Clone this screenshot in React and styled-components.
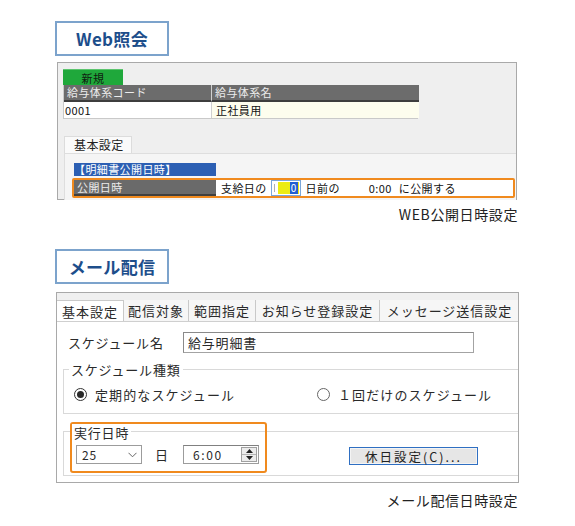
import styled, { createGlobalStyle } from "styled-components";

const GlobalStyle = createGlobalStyle`
  html, body {
    margin: 0;
    padding: 0;
    background: #fff;
  }
  body {
    font-family: "Noto Sans CJK JP", "Noto Sans", sans-serif;
    color: #222;
  }
`;

const Page = styled.div`
  width: 575px;
  height: 526px;
  box-sizing: border-box;
  padding: 21px 0 0 55px;
  overflow: hidden;
`;

const Column = styled.div`
  width: 463px;
  display: flex;
  flex-direction: column;
`;

const Heading = styled.div`
  width: 114px;
  height: 35px;
  box-sizing: border-box;
  border: 2px solid #7ca3cc;
  margin-top: ${(p) => p.$top || 0}px;
  display: flex;
  align-items: center;
  justify-content: center;
  font-size: 17px;
  font-weight: 700;
  color: #1d4e8b;
  letter-spacing: 0.3px;
`;

const Caption = styled.div`
  margin-top: ${(p) => p.$top}px;
  text-align: right;
  font-size: 14px;
  line-height: 18px;
  letter-spacing: 0.6px;
  color: #222;
`;

/* ---------- WEB照会 screenshot ---------- */

const Shot = styled.div`
  margin: 6px 0 0 2px;
  width: 460px;
  height: 138px;
  box-sizing: border-box;
  border: 1px solid #a9a9a9;
  background: #efefef;
  padding: 6px 0 0 5px;
  font-size: 11px;
  letter-spacing: 0.4px;
`;

const NewButton = styled.div`
  width: 60px;
  height: 16px;
  background: #1fa83b;
  border-top: 1px solid #5cc46e;
  box-sizing: border-box;
  display: flex;
  align-items: center;
  justify-content: center;
  color: #102010;
  font-size: 11px;
`;

const Grid = styled.div`
  width: 355px;
  display: grid;
  grid-template-columns: 148px 207px;
  border: 1px solid #c9c9c9;
  border-top: none;
  box-sizing: border-box;
`;

const HeadCell = styled.div`
  height: 17px;
  box-sizing: border-box;
  background: #6c6c6c;
  border-bottom: 2px solid #3d3d3d;
  border-right: ${(p) => (p.$last ? "none" : "1px solid #d0d0d0")};
  color: #ececec;
  padding-left: 3px;
  line-height: 15px;
`;

const Cell = styled.div`
  height: 16px;
  box-sizing: border-box;
  background: ${(p) => (p.$tint ? "#fdfdee" : "#fff")};
  border-right: ${(p) => (p.$last ? "none" : "1px solid #d0d0d0")};
  color: #111;
  padding-left: ${(p) => (p.$tint ? 4 : 1)}px;
  line-height: 16px;
`;

const SmallTab = styled.div`
  margin: 17px 0 0 1px;
  width: 68px;
  height: 17px;
  box-sizing: border-box;
  background: #fafafa;
  border: 1px solid #dcdcdc;
  border-bottom: none;
  font-size: 12px;
  line-height: 16px;
  padding-left: 9px;
  color: #222;
`;

const TabBody = styled.div`
  margin-left: 1px;
  height: 47px;
  box-sizing: border-box;
  background: #f5f5f5;
  border-top: 1px solid #dedede;
  border-left: 1px solid #dedede;
  padding: 9px 0 0 9px;
`;

const BlueLabel = styled.div`
  width: 142px;
  height: 13px;
  background: #2c5fb3;
  color: #fff;
  line-height: 13px;
  font-size: 11px;
`;

const OrangeRow = styled.div`
  margin: 2px 0 0 -2px;
  width: 443px;
  height: 20px;
  box-sizing: border-box;
  border: 2px solid #f08a1e;
  border-radius: 2px;
  display: flex;
`;

const GrayLabel = styled.div`
  width: 142px;
  background: #6a6a6a;
  border-bottom: 2px solid #3f3f3f;
  box-sizing: border-box;
  color: #ececec;
  padding-left: 3px;
  line-height: 15px;
`;

const Line = styled.div`
  flex: 1;
  background: #fff;
  display: flex;
  align-items: center;
  padding-left: 5px;
  color: #111;
`;

const Word = styled.span`
  margin-left: ${(p) => p.$gap || 0}px;
  white-space: nowrap;
`;

const DayBox = styled.div`
  margin-left: 4px;
  width: 30px;
  height: 16px;
  box-sizing: border-box;
  border: 1px solid #7aa7da;
  display: flex;
  align-items: stretch;
  padding: 1px;
  background: #fff;
`;

const Caret = styled.span`
  width: 3px;
  border-left: 1px solid #b0b0b0;
  margin: 2px 0 2px 1px;
`;

const Yellow = styled.span`
  flex: 1;
  background: #ecec12;
  display: flex;
  justify-content: flex-end;
  padding-right: 1px;
`;

const Picked = styled.span`
  background: #1f5fd2;
  color: #fff;
  font-size: 10px;
  line-height: 12px;
  padding: 0 1px;
`;

/* ---------- メール配信 screenshot ---------- */

const Window = styled.div`
  margin: 8px 0 0 1px;
  width: 463px;
  height: 191px;
  box-sizing: border-box;
  border: 1px solid #a9a9a9;
  background: #fff;
  overflow: hidden;
  display: flex;
  flex-direction: column;
  font-size: 13px;
  letter-spacing: 0.8px;
  color: #2a2a2a;
`;

const TopStrip = styled.div`
  height: 7px;
  background: #f0f0f0;
`;

const TabRow = styled.div`
  height: 22px;
  display: flex;
  border-bottom: 1px solid #cfcfcf;
  box-sizing: border-box;
  background: #f6f6f6;
`;

const Tab = styled.div`
  width: ${(p) => p.$w}px;
  flex-shrink: 0;
  box-sizing: border-box;
  border-right: 1px solid #c9c9c9;
  border-top: ${(p) => (p.$active ? "1px solid #c9c9c9" : "none")};
  background: ${(p) => (p.$active ? "#fff" : "#f6f6f6")};
  display: flex;
  align-items: center;
  justify-content: center;
  white-space: nowrap;
  font-size: 13px;
  letter-spacing: 1px;
`;

const Body = styled.div`
  padding: 10px 0 0 11px;
`;

const NameRow = styled.div`
  display: flex;
  align-items: center;
  height: 21px;
`;

const FieldLabel = styled.div`
  width: 115px;
`;

const TextBox = styled.div`
  width: 291px;
  height: 21px;
  box-sizing: border-box;
  border: 1px solid #a3a3a3;
  border-top-color: #8a8a8a;
  border-left-color: #8a8a8a;
  padding-left: 4px;
  line-height: 19px;
`;

const Group = styled.div`
  margin: ${(p) => p.$top}px 0 0 -5px;
  height: 45px;
  box-sizing: border-box;
  border: 1px solid #d9d9d9;
  border-right: none;
  display: flex;
  flex-direction: ${(p) => (p.$row ? "row" : "column")};
  align-items: flex-start;
`;

const Legend = styled.div`
  margin: ${(p) => (p.$inset ? 0 : -9)}px 0 0 ${(p) => p.$left}px;
  padding: 0 2px;
  background: #fff;
  line-height: 17px;
  width: fit-content;
`;

const RadioRow = styled.div`
  display: flex;
  align-items: center;
  margin: 7px 0 0 10px;
  letter-spacing: 1.1px;
`;

const Option = styled.div`
  width: ${(p) => (p.$w ? `${p.$w}px` : "auto")};
  display: flex;
  align-items: center;
  gap: 8px;
  white-space: nowrap;
`;

const Radio = styled.span`
  width: 13px;
  height: 13px;
  box-sizing: border-box;
  border-radius: 50%;
  border: 1px solid ${(p) => (p.$on ? "#333" : "#666")};
  background: #fff;
  display: flex;
  align-items: center;
  justify-content: center;
  &::after {
    content: "";
    width: 7px;
    height: 7px;
    border-radius: 50%;
    background: ${(p) => (p.$on ? "#2a2a2a" : "transparent")};
  }
`;

const Highlight = styled.div`
  margin: -10px 0 0 6px;
  width: 197px;
  height: 51px;
  box-sizing: border-box;
  border: 2px solid #f08a1e;
  border-radius: 3px;
  flex-shrink: 0;
`;

const Controls = styled.div`
  display: flex;
  align-items: center;
  margin: 4px 0 0 4px;
`;

const Select = styled.div`
  width: 66px;
  height: 19px;
  box-sizing: border-box;
  border: 1px solid #9c9c9c;
  display: flex;
  align-items: center;
  justify-content: space-between;
  padding: 0 4px 0 5px;
  font-size: 12px;
`;

const DayMark = styled.span`
  margin: 0 0 0 13px;
  width: 28px;
`;

const TimeBox = styled.div`
  width: 76px;
  height: 19px;
  box-sizing: border-box;
  border: 1px solid #9c9c9c;
  border-top-color: #808080;
  display: flex;
  align-items: center;
  justify-content: space-between;
  padding: 0 1px 0 9px;
  font-size: 12px;
  letter-spacing: 1.6px;
`;

const Spin = styled.div`
  width: 16px;
  height: 15px;
  box-sizing: border-box;
  border: 1px solid #a0a0a0;
  background: #ececec;
  display: flex;
  flex-direction: column;
`;

const SpinHalf = styled.div`
  flex: 1;
  display: flex;
  align-items: center;
  justify-content: center;
  border-top: ${(p) => (p.$lower ? "1px solid #b5b5b5" : "none")};
`;

const Button = styled.div`
  margin: 15px 0 0 82px;
  width: 129px;
  height: 18px;
  box-sizing: border-box;
  border: 1px solid #2f6fc2;
  background: #e6e6e6;
  box-shadow: inset 0 0 0 1px #f4f4f4;
  display: flex;
  align-items: center;
  justify-content: center;
  font-size: 12.5px;
  letter-spacing: 2px;
  color: #222;
`;

const tabs = [
  { label: "基本設定", w: 67, active: true },
  { label: "配信対象", w: 65 },
  { label: "範囲指定", w: 67 },
  { label: "お知らせ登録設定", w: 124 },
  { label: "メッセージ送信設定", w: 140 },
];

const Chevron = () => (
  <svg width="9" height="6" viewBox="0 0 9 6">
    <polyline points="0.5,0.8 4.5,4.8 8.5,0.8" fill="none" stroke="#666" strokeWidth="1" />
  </svg>
);

const Arrow = ({ down }) => (
  <svg width="7" height="4" viewBox="0 0 7 4">
    <polygon points={down ? "0,0 7,0 3.5,4" : "0,4 7,4 3.5,0"} fill="#222" />
  </svg>
);

export default function App() {
  return (
    <>
      <GlobalStyle />
      <Page>
        <Column>
          <Heading>Web照会</Heading>

          <Shot>
            <NewButton>新規</NewButton>
            <Grid>
              <HeadCell>給与体系コード</HeadCell>
              <HeadCell $last>給与体系名</HeadCell>
              <Cell>0001</Cell>
              <Cell $tint $last>正社員用</Cell>
            </Grid>
            <SmallTab>基本設定</SmallTab>
            <TabBody>
              <BlueLabel>【明細書公開日時】</BlueLabel>
              <OrangeRow>
                <GrayLabel>公開日時</GrayLabel>
                <Line>
                  <Word>支給日の</Word>
                  <DayBox>
                    <Caret />
                    <Yellow>
                      <Picked>0</Picked>
                    </Yellow>
                  </DayBox>
                  <Word $gap={5}>日前の</Word>
                  <Word $gap={29}>0:00</Word>
                  <Word $gap={7}>に公開する</Word>
                </Line>
              </OrangeRow>
            </TabBody>
          </Shot>
          <Caption $top={5}>WEB公開日時設定</Caption>

          <Heading $top={26}>メール配信</Heading>

          <Window>
            <TopStrip />
            <TabRow>
              {tabs.map((t) => (
                <Tab key={t.label} $w={t.w} $active={t.active}>
                  {t.label}
                </Tab>
              ))}
            </TabRow>
            <Body>
              <NameRow>
                <FieldLabel>スケジュール名</FieldLabel>
                <TextBox>給与明細書</TextBox>
              </NameRow>

              <Group $top={16}>
                <Legend $left={5}>スケジュール種類</Legend>
                <RadioRow>
                  <Option $w={243}>
                    <Radio $on />
                    定期的なスケジュール
                  </Option>
                  <Option>
                    <Radio />
                    １回だけのスケジュール
                  </Option>
                </RadioRow>
              </Group>

              <Group $top={17} $row>
                <Highlight>
                  <Legend $left={0} $inset>
                    実行日時
                  </Legend>
                  <Controls>
                    <Select>
                      25
                      <Chevron />
                    </Select>
                    <DayMark>日</DayMark>
                    <TimeBox>
                      6:00
                      <Spin>
                        <SpinHalf>
                          <Arrow />
                        </SpinHalf>
                        <SpinHalf $lower>
                          <Arrow down />
                        </SpinHalf>
                      </Spin>
                    </TimeBox>
                  </Controls>
                </Highlight>
                <Button>休日設定(C)...</Button>
              </Group>
            </Body>
          </Window>
          <Caption $top={8}>メール配信日時設定</Caption>
        </Column>
      </Page>
    </>
  );
}
